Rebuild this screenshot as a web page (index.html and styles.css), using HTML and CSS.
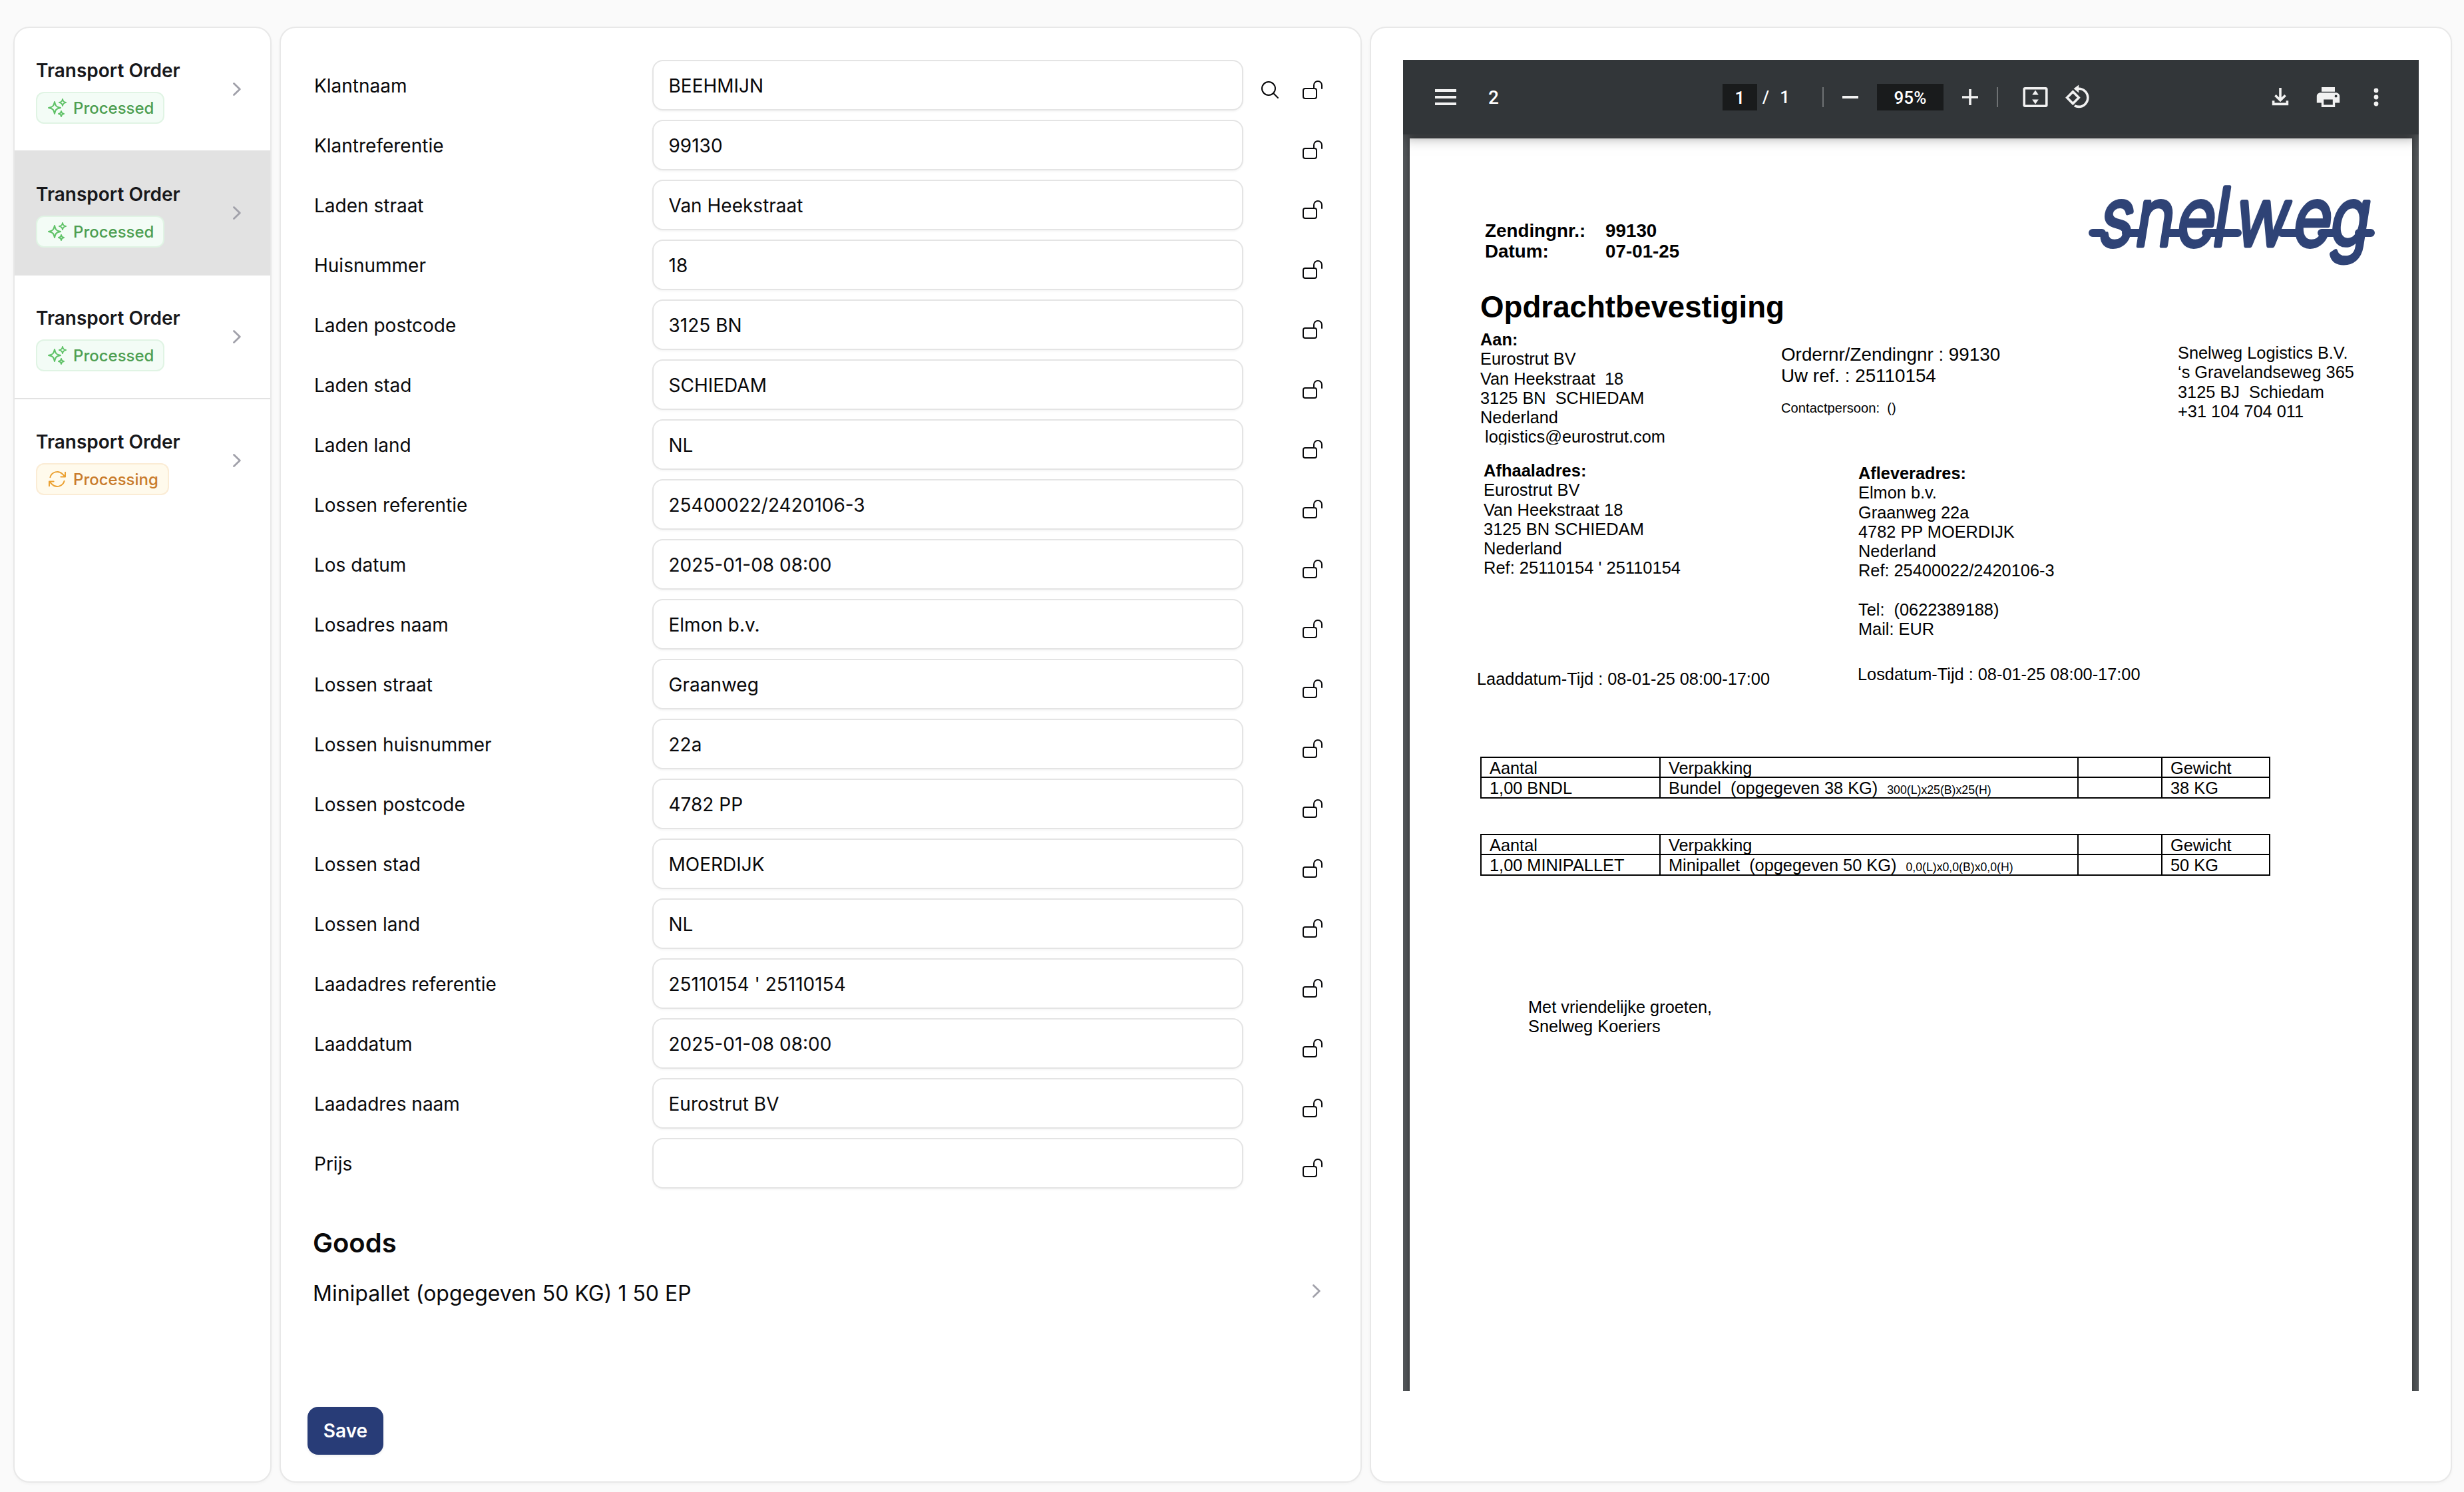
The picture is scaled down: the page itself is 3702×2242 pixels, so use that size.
FILE: index.html
```html
<!DOCTYPE html>
<html lang="nl">
<head>
    <meta charset="UTF-8">
    <meta name="viewport" content="width=device-width, initial-scale=1.0">
    <title>Transport Orders</title>
    <link rel="stylesheet" href="styles.css">
</head>
<body>
<svg class="sprite" width="0" height="0">
    <symbol id="sparkles" viewBox="0 0 24 24"><path d="M9.813 15.904 9 18.75l-.813-2.846a4.5 4.5 0 0 0-3.09-3.09L2.25 12l2.846-.813a4.5 4.5 0 0 0 3.09-3.09L9 5.25l.813 2.846a4.5 4.5 0 0 0 3.09 3.09L15.75 12l-2.846.813a4.5 4.5 0 0 0-3.09 3.09ZM18.259 8.715 18 9.75l-.259-1.035a3.375 3.375 0 0 0-2.455-2.456L14.25 6l1.036-.259a3.375 3.375 0 0 0 2.455-2.456L18 2.25l.259 1.035a3.375 3.375 0 0 0 2.456 2.456L21.75 6l-1.035.259a3.375 3.375 0 0 0-2.456 2.456ZM16.894 20.567 16.5 21.75l-.394-1.183a2.25 2.25 0 0 0-1.423-1.423L13.5 18.75l1.183-.394a2.25 2.25 0 0 0 1.423-1.423l.394-1.183.394 1.183a2.25 2.25 0 0 0 1.423 1.423l1.183.394-1.183.394a2.25 2.25 0 0 0-1.423 1.423Z"/></symbol>
    <symbol id="refresh" viewBox="0 0 24 24"><path d="M16.023 9.348h4.992v-.001M2.985 19.644v-4.992m0 0h4.992m-4.993 0 3.181 3.183a8.25 8.25 0 0 0 13.803-3.7M4.031 9.865a8.25 8.25 0 0 1 13.803-3.7l3.181 3.182m0-4.991v4.99"/></symbol>
    <symbol id="lock" viewBox="0 0 24 24"><path d="M13.5 10.5V6.75a4.5 4.5 0 1 1 9 0v3.75M3.75 21.75h10.5a2.25 2.25 0 0 0 2.25-2.25v-6.75a2.25 2.25 0 0 0-2.25-2.25H3.75a2.25 2.25 0 0 0-2.25 2.25v6.75a2.25 2.25 0 0 0 2.25 2.25Z"/></symbol>
    <symbol id="search" viewBox="0 0 24 24"><path d="m21 21-5.197-5.197m0 0A7.5 7.5 0 1 0 5.196 5.196a7.5 7.5 0 0 0 10.607 10.607Z"/></symbol>
    <symbol id="chevron" viewBox="0 0 12 20"><path d="M1.5 1.5 10.3 10 1.5 18.5"/></symbol>
</svg>

<div class="layout">
    <!-- order list -->
    <div class="panel orders">
        <div class="order">
            <div>
                <div class="order-title">Transport Order</div>
                <div class="badge processed"><svg class="icon"><use href="#sparkles"/></svg>Processed</div>
            </div>
            <svg class="chevron"><use href="#chevron"/></svg>
        </div>
        <div class="order active">
            <div>
                <div class="order-title">Transport Order</div>
                <div class="badge processed"><svg class="icon"><use href="#sparkles"/></svg>Processed</div>
            </div>
            <svg class="chevron"><use href="#chevron"/></svg>
        </div>
        <div class="order">
            <div>
                <div class="order-title">Transport Order</div>
                <div class="badge processed"><svg class="icon"><use href="#sparkles"/></svg>Processed</div>
            </div>
            <svg class="chevron"><use href="#chevron"/></svg>
        </div>
        <div class="order">
            <div>
                <div class="order-title">Transport Order</div>
                <div class="badge processing"><svg class="icon"><use href="#refresh"/></svg>Processing</div>
            </div>
            <svg class="chevron"><use href="#chevron"/></svg>
        </div>
    </div>

    <!-- extracted fields -->
    <div class="panel form">
        <div class="field"><label>Klantnaam</label><input value="BEEHMIJN"><svg class="icon find"><use href="#search"/></svg><svg class="icon"><use href="#lock"/></svg></div>
        <div class="field"><label>Klantreferentie</label><input value="99130"><svg class="icon"><use href="#lock"/></svg></div>
        <div class="field"><label>Laden straat</label><input value="Van Heekstraat"><svg class="icon"><use href="#lock"/></svg></div>
        <div class="field"><label>Huisnummer</label><input value="18"><svg class="icon"><use href="#lock"/></svg></div>
        <div class="field"><label>Laden postcode</label><input value="3125 BN"><svg class="icon"><use href="#lock"/></svg></div>
        <div class="field"><label>Laden stad</label><input value="SCHIEDAM"><svg class="icon"><use href="#lock"/></svg></div>
        <div class="field"><label>Laden land</label><input value="NL"><svg class="icon"><use href="#lock"/></svg></div>
        <div class="field"><label>Lossen referentie</label><input value="25400022/2420106-3"><svg class="icon"><use href="#lock"/></svg></div>
        <div class="field"><label>Los datum</label><input value="2025-01-08 08:00"><svg class="icon"><use href="#lock"/></svg></div>
        <div class="field"><label>Losadres naam</label><input value="Elmon b.v."><svg class="icon"><use href="#lock"/></svg></div>
        <div class="field"><label>Lossen straat</label><input value="Graanweg"><svg class="icon"><use href="#lock"/></svg></div>
        <div class="field"><label>Lossen huisnummer</label><input value="22a"><svg class="icon"><use href="#lock"/></svg></div>
        <div class="field"><label>Lossen postcode</label><input value="4782 PP"><svg class="icon"><use href="#lock"/></svg></div>
        <div class="field"><label>Lossen stad</label><input value="MOERDIJK"><svg class="icon"><use href="#lock"/></svg></div>
        <div class="field"><label>Lossen land</label><input value="NL"><svg class="icon"><use href="#lock"/></svg></div>
        <div class="field"><label>Laadadres referentie</label><input value="25110154 ' 25110154"><svg class="icon"><use href="#lock"/></svg></div>
        <div class="field"><label>Laaddatum</label><input value="2025-01-08 08:00"><svg class="icon"><use href="#lock"/></svg></div>
        <div class="field"><label>Laadadres naam</label><input value="Eurostrut BV"><svg class="icon"><use href="#lock"/></svg></div>
        <div class="field"><label>Prijs</label><input value=""><svg class="icon"><use href="#lock"/></svg></div>
        <h2>Goods</h2>
        <div class="goods-row">
            <span>Minipallet (opgegeven 50 KG) 1 50 EP</span>
            <svg class="chevron"><use href="#chevron"/></svg>
        </div>
        <button class="save">Save</button>
    </div>

    <!-- pdf viewer -->
    <div class="panel preview">
        <div class="viewer">
            <div class="toolbar">
                <div class="tools-left">
                    <svg class="tool" viewBox="0 0 20 20"><path d="M2 4h16v2H2zM2 9h16v2H2zM2 14h16v2H2z"/></svg>
                    <span class="doc-title">2</span>
                </div>
                <div class="tools-center">
                    <span class="page-input">1</span>
                    <span class="slash">/</span>
                    <span class="page-total">1</span>
                    <span class="divider"></span>
                    <svg class="tool minus" viewBox="0 0 20 20"><path d="M4 9h12v2H4z"/></svg>
                    <span class="zoom-input">95%</span>
                    <svg class="tool plus" viewBox="0 0 20 20"><path d="M9.1 4h1.8v5.1H16v1.8h-5.1V16H9.1v-5.1H4V9.1h5.1z"/></svg>
                    <span class="divider"></span>
                    <svg class="tool fit" viewBox="0 0 20 20"><path fill-rule="evenodd" d="M2.2 2.5h15.6c.8 0 1.5.6 1.5 1.4v12.2c0 .8-.7 1.4-1.5 1.4H2.2c-.8 0-1.5-.6-1.5-1.4V3.9c0-.8.7-1.4 1.5-1.4zm.3 1.8v11.4h15V4.3zM10 4.8l2.4 3.4H7.6zM10 15.2l-2.4-3.4h4.8z"/></svg>
                    <svg class="tool rotate" viewBox="0 0 20 20"><path class="line" d="M6.2 5.9 10.6 10.4 6.2 14.9 1.8 10.4z"/><path class="line" d="M9.8 3.6h.8a6.8 6.8 0 0 1 0 13.6c-1.2 0-2.2-.3-3.2-.8"/><path d="M10.6.8v6L6.8 3.6z"/></svg>
                </div>
                <div class="tools-right">
                    <svg class="tool" viewBox="0 0 20 20"><path class="line" d="M10 3v9.2M6.2 8.6 10 12.4l3.8-3.8M4.8 12.6v2.6h10.4v-2.6"/></svg>
                    <svg class="tool print" viewBox="0 0 20 20"><path fill-rule="evenodd" d="M5 2.5h10v3.4H5zM4.2 6.6h11.6c1.5 0 2.8 1.2 2.8 2.7v5h-3.5v3.2H4.9v-3.2H1.4v-5c0-1.5 1.3-2.7 2.8-2.7zm2.4 5.2v4h6.8v-4zM15.8 8.3a1 1 0 1 0 0 2 1 1 0 0 0 0-2z"/></svg>
                    <svg class="tool" viewBox="0 0 20 20"><circle cx="10" cy="5" r="1.7"/><circle cx="10" cy="10" r="1.7"/><circle cx="10" cy="15" r="1.7"/></svg>
                </div>
            </div>
            <div class="sheet">
                <div class="sheet-head">
                    <div class="refs">
                        <span>Zendingnr.:</span><span>99130</span>
                        <span>Datum:</span><span>07-01-25</span>
                    </div>
                    <svg class="logo" viewBox="0 0 430 125">
                        <g transform="translate(0 93) skewX(-9) scale(.82 1)">
                            <text x="15 81 157 223 264 370 438">snelweg</text>
                        </g>
                        <path d="M6 74h14M56 74h24M116 74h20M176 74h48M290 74h26M350 74h22M406 74h18"/>
                    </svg>
                </div>
                <h1>Opdrachtbevestiging</h1>
                <div class="parties">
                    <div class="to"><b>Aan:</b>
Eurostrut BV
Van Heekstraat  18
3125 BN  SCHIEDAM
Nederland
 logistics@eurostrut.com</div>
                    <div class="order-ref">Ordernr/Zendingnr : 99130
Uw ref. : 25110154
<div class="contact">Contactpersoon:  ()</div></div>
                    <div class="company">Snelweg Logistics B.V.
‘s Gravelandseweg 365
3125 BJ  Schiedam
+31 104 704 011</div>
                </div>
                <div class="addresses">
                    <div class="pickup"><b>Afhaaladres:</b>
Eurostrut BV
Van Heekstraat 18
3125 BN SCHIEDAM
Nederland
Ref: 25110154 ' 25110154</div>
                    <div class="delivery"><b>Afleveradres:</b>
Elmon b.v.
Graanweg 22a
4782 PP MOERDIJK
Nederland
Ref: 25400022/2420106-3

Tel:  (0622389188)
Mail: EUR</div>
                </div>
                <div class="dates">
                    <div class="load">Laaddatum-Tijd : 08-01-25 08:00-17:00</div>
                    <div>Losdatum-Tijd : 08-01-25 08:00-17:00</div>
                </div>
                <div class="cargo">
                    <div class="row head"><span>Aantal</span><span>Verpakking</span><span></span><span>Gewicht</span></div>
                    <div class="row"><span>1,00 BNDL</span><span>Bundel  (opgegeven 38 KG)  <small>300(L)x25(B)x25(H)</small></span><span></span><span>38 KG</span></div>
                </div>
                <div class="cargo">
                    <div class="row head"><span>Aantal</span><span>Verpakking</span><span></span><span>Gewicht</span></div>
                    <div class="row"><span>1,00 MINIPALLET</span><span>Minipallet  (opgegeven 50 KG)  <small>0,0(L)x0,0(B)x0,0(H)</small></span><span></span><span>50 KG</span></div>
                </div>
                <div class="regards">Met vriendelijke groeten,
Snelweg Koeriers</div>
            </div>
        </div>
    </div>
</div>
</body>
</html>
```
FILE: styles.css
```css
* {
    box-sizing: border-box;
}
body {
    margin: 0;
    background-color: #fafafa;
    font-family: Inter, sans-serif;
    font-size: 28px;
    color: #09090b;
}
.sprite {
    display: block;
}
.layout {
    display: grid;
    grid-template-columns: 388px 1626px 1626px;
    gap: 12px;
    height: 2242px;
    padding: 40px 18px 14px 20px;
}
.panel {
    background-color: #fff;
    border: 2px solid #e8e8e8;
    border-radius: 24px;
    box-shadow: 0 2px 4px rgba(0, 0, 0, 0.03);
    overflow: hidden;
}
.icon {
    width: 32px;
    height: 32px;
    flex: none;
    fill: none;
    stroke: currentColor;
    stroke-width: 1.5;
    stroke-linecap: round;
    stroke-linejoin: round;
}
.chevron {
    width: 12px;
    height: 20px;
    fill: none;
    stroke: #a1a1aa;
    stroke-width: 2.8;
    stroke-linecap: round;
    stroke-linejoin: round;
}

/* orders */
.order {
    display: flex;
    justify-content: space-between;
    align-items: center;
    height: 186px;
    padding: 4px 44px 0 32px;
    border-bottom: 2px solid #e2e2e2;
}
.order .chevron {
    margin-top: -4px;
}
.order:last-child {
    border-bottom-color: transparent;
}
.order.active {
    background-color: #e2e2e2;
}
.order-title {
    font-weight: 600;
    line-height: 40px;
    margin-bottom: 12px;
    color: #18181b;
}
.badge {
    display: inline-flex;
    align-items: center;
    gap: 8px;
    height: 48px;
    padding: 0 14px;
    border: 2px solid;
    border-radius: 12px;
    font-size: 24px;
    font-weight: 500;
    vertical-align: top;
}
.processed {
    color: #4e9f52;
    background-color: #f3fcf6;
    border-color: #e0f4e4;
}
.processed .icon {
    color: #5fc267;
}
.processing {
    color: #c97c2c;
    background-color: #fffaec;
    border-color: #fbecd5;
}
.processing .icon {
    color: #eba132;
}

/* form */
.form {
    padding: 48px 0 0 50px;
}
.field {
    display: flex;
    align-items: center;
    height: 76px;
    margin-bottom: 14px;
}
.field label {
    width: 508px;
    padding-top: 2px;
}
.field input {
    width: 888px;
    height: 76px;
    padding: 1px 22.5px 0;
    border: 2px solid #e4e4e4;
    border-radius: 16px;
    box-shadow: 0 2px 3px rgba(0, 0, 0, 0.04);
    background: #fff;
    font: inherit;
    color: inherit;
}
.field .icon {
    margin: 14px 0 0 88px;
}
.field .find {
    margin-left: 24px;
}
.field .find + .icon {
    margin-left: 32px;
}
h2 {
    margin: 58px 0 0 -2px;
    font-size: 40px;
    line-height: 48px;
    font-weight: 600;
}
.goods-row {
    display: flex;
    justify-content: space-between;
    align-items: center;
    margin: 32px 60px 0 -2px;
    font-size: 32px;
    line-height: 40px;
}
.goods-row .chevron {
    margin-top: -8px;
}
.save {
    display: block;
    width: 114px;
    height: 72px;
    margin: 150px 0 0 -10px;
    padding: 0;
    border: 0;
    border-radius: 16px;
    background-color: #283c77;
    box-shadow: 0 2px 4px rgba(0, 0, 0, 0.06);
    color: #fff;
    font: 600 28px Inter, sans-serif;
}

/* viewer */
.preview {
    padding: 48px;
}
.viewer {
    width: 1526px;
    height: 2000px;
    overflow: hidden;
    background-color: #525659;
}
.toolbar {
    position: relative;
    z-index: 1;
    display: flex;
    align-items: center;
    height: 112px;
    background-color: #323639;
    box-shadow: 0 2px 20px rgba(0, 0, 0, 0.5);
    color: #fff;
    font-family: Roboto, sans-serif;
    font-size: 28px;
}
.tool {
    width: 40px;
    height: 40px;
    flex: none;
    fill: #f1f1f1;
}
.tool .line {
    fill: none;
    stroke: #f1f1f1;
    stroke-width: 1.8;
}
.tools-left {
    display: flex;
    align-items: center;
    width: 480px;
    padding-left: 44px;
}
.doc-title {
    margin-left: 44px;
    font-weight: 500;
}
.tools-center {
    display: flex;
    align-items: center;
    font-size: 26px;
    font-weight: 500;
}
.page-input,
.zoom-input {
    width: 52px;
    height: 40px;
    line-height: 42px;
    text-align: center;
    background-color: #191b1c;
}
.zoom-input {
    width: 100px;
    margin: 0 20px;
}
.slash {
    margin-left: 8px;
}
.page-total {
    margin-left: 16px;
}
.divider {
    width: 2px;
    height: 30px;
    margin-left: 49px;
    background-color: #6f7274;
}
.minus {
    margin-left: 20px;
}
.plus + .divider {
    margin-left: 20px;
}
.fit {
    margin-left: 36px;
}
.rotate {
    margin-left: 24px;
}
.tools-right {
    display: flex;
    gap: 32px;
    margin-left: auto;
    padding-right: 44px;
}

/* document */
.sheet {
    height: 2000px;
    margin: 6px 10px 0;
    padding: 68px 56px 0 106px;
    background-color: #fff;
    box-shadow: 0 0 10px rgba(0, 0, 0, 0.45);
    font-family: "Liberation Sans", Arial, sans-serif;
    font-size: 25.35px;
    line-height: 29.3px;
    color: #000;
}
.to,
.order-ref,
.company,
.addresses div,
.regards,
.row span {
    white-space: pre;
}
.sheet-head {
    display: flex;
    justify-content: space-between;
    height: 125px;
}
.refs {
    display: grid;
    grid-template-columns: 181px auto;
    align-content: start;
    margin: 55px 0 0 7px;
    font-size: 27.8px;
    font-weight: bold;
    line-height: 31px;
}
.logo {
    width: 430px;
    height: 125px;
    overflow: visible;
}
.logo text {
    font-family: Inter, sans-serif;
    font-size: 120px;
    font-weight: 300;
    fill: #2f4376;
    stroke: #2f4376;
    stroke-width: 7;
    stroke-linejoin: round;
}
.logo path {
    fill: none;
    stroke: #2f4376;
    stroke-width: 12;
    stroke-linecap: round;
}
h1 {
    margin: 35px 0 0;
    font-size: 45.7px;
    line-height: 52px;
}
.parties {
    display: grid;
    grid-template-columns: 452px 596px auto;
    height: 172px;
    margin-top: 8px;
}
.to {
    height: 172px;
    overflow: hidden;
}
.order-ref {
    padding-top: 21px;
    font-size: 27.8px;
    line-height: 32px;
}
.contact {
    margin-top: 20px;
    font-size: 20.2px;
    line-height: 24px;
}
.company {
    padding-top: 20px;
}
.addresses {
    display: grid;
    grid-template-columns: 563px auto;
    height: 306px;
    padding: 24px 0 0 5px;
}
.pickup {
    padding-top: 1px;
    font-size: 25.5px;
}
.delivery {
    padding-top: 5px;
}
.dates {
    display: grid;
    grid-template-columns: 572px auto;
    height: 163px;
    padding-top: 25px;
    margin-left: -5px;
}
.load {
    padding-top: 7px;
}
.cargo {
    width: 1187px;
    margin-bottom: 53px;
    border: 2px solid #000;
}
.row {
    display: grid;
    grid-template-columns: 267px 628px 126px auto;
    height: 29px;
    line-height: 30px;
}
.row.head {
    height: 30px;
    border-bottom: 2px solid #000;
}
.row span {
    height: 29px;
    padding-left: 12px;
}
.row.head span {
    height: 28px;
}
.row span + span {
    border-left: 2px solid #000;
}
.row small {
    font-size: 17.7px;
}
.regards {
    margin: 183px 0 0 72px;
}
```
